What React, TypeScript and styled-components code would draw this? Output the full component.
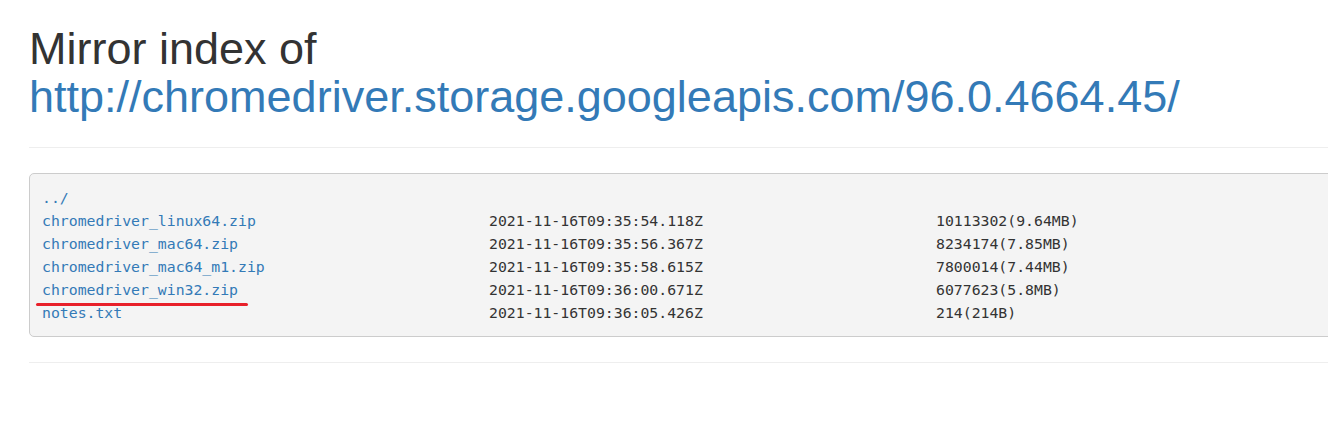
import React from "react";
import styled, { createGlobalStyle } from "styled-components";

const GlobalStyle = createGlobalStyle`
  html, body {
    margin: 0;
    padding: 0;
    overflow: hidden;
    background: #fff;
  }
  body {
    font-family: "Liberation Sans", Arial, sans-serif;
    color: #333;
  }
`;

const Container = styled.div`
  width: 1440px;
  padding: 0 29px;
`;

const Title = styled.h1`
  margin: 25px 0 27px;
  font-size: 45px;
  line-height: 47.5px;
  font-weight: 400;
  color: #333;
`;

const TitleLink = styled.a`
  color: #337ab7;
  text-decoration: none;
`;

const Rule = styled.hr`
  margin: 0 0 25px;
  border: 0;
  border-top: 1px solid #eee;
`;

const Listing = styled.div`
  margin: 0 0 25px;
  padding: 12px;
  background: #f4f4f4;
  border: 1px solid #ccc;
  border-radius: 5px;
  font-family: "DejaVu Sans Mono", "Liberation Mono", monospace;
  font-size: 14.8px;
  line-height: 23px;
  color: #333;
`;

const Row = styled.div`
  display: grid;
  grid-template-columns: 447px 447px auto;
  white-space: pre;
`;

const FileLink = styled.a<{ $marked?: boolean }>`
  color: #337ab7;
  text-decoration: none;
  justify-self: start;
  position: relative;

  ${(p) =>
    p.$marked &&
    `
    &::after {
      content: "";
      position: absolute;
      left: -6px;
      right: -10px;
      bottom: -5px;
      height: 3.5px;
      border-radius: 2px;
      background: #e8202a;
    }
  `}
`;

const files = [
  { name: "chromedriver_linux64.zip", date: "2021-11-16T09:35:54.118Z", size: "10113302(9.64MB)" },
  { name: "chromedriver_mac64.zip", date: "2021-11-16T09:35:56.367Z", size: "8234174(7.85MB)" },
  { name: "chromedriver_mac64_m1.zip", date: "2021-11-16T09:35:58.615Z", size: "7800014(7.44MB)" },
  { name: "chromedriver_win32.zip", date: "2021-11-16T09:36:00.671Z", size: "6077623(5.8MB)", marked: true },
  { name: "notes.txt", date: "2021-11-16T09:36:05.426Z", size: "214(214B)" },
];

const App = () => {
  return (
    <Container>
      <GlobalStyle />
      <Title>
        Mirror index of
        <br />
        <TitleLink href="#">http://chromedriver.storage.googleapis.com/96.0.4664.45/</TitleLink>
      </Title>
      <Rule />
      <Listing>
        <Row>
          <FileLink href="#">../</FileLink>
        </Row>
        {files.map((f) => (
          <Row key={f.name}>
            <FileLink href="#" $marked={f.marked}>{f.name}</FileLink>
            <span>{f.date}</span>
            <span>{f.size}</span>
          </Row>
        ))}
      </Listing>
      <Rule />
    </Container>
  );
};

export default App;
